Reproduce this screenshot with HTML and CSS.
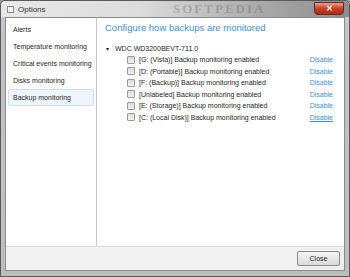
FILE: index.html
```html
<!DOCTYPE html>
<html lang="en">
<head>
    <meta charset="UTF-8">
    <title>Options</title>
    <link rel="stylesheet" href="styles.css">
</head>
<body>
    <div class="window">
        <div class="titlebar">
            <span class="app-icon"></span>
            <span class="title">Options</span>
            <span class="watermark">SOFTPEDIA</span>
            <span class="close-x">&#x2715;</span>
        </div>
        <div class="client">
            <div class="main">
                <ul class="nav">
                    <li>Alerts</li>
                    <li>Temperature monitoring</li>
                    <li>Critical events monitoring</li>
                    <li>Disks monitoring</li>
                    <li class="selected">Backup monitoring</li>
                </ul>
                <div class="panel">
                    <h1>Configure how backups are monitored</h1>
                    <div class="disk">
                        <span class="bullet">&#9662;</span>
                        <span>WDC WD3200BEVT-711.0</span>
                    </div>
                    <div class="rows">
                        <div class="row"><span class="check"></span><span class="label">[G: (Vista)] Backup monitoring enabled</span><a class="link">Disable</a></div>
                        <div class="row"><span class="check"></span><span class="label">[D: (Portable)] Backup monitoring enabled</span><a class="link">Disable</a></div>
                        <div class="row"><span class="check"></span><span class="label">[F: (Backup)] Backup monitoring enabled</span><a class="link">Disable</a></div>
                        <div class="row"><span class="check"></span><span class="label">[Unlabeled] Backup monitoring enabled</span><a class="link">Disable</a></div>
                        <div class="row"><span class="check"></span><span class="label">[E: (Storage)] Backup monitoring enabled</span><a class="link">Disable</a></div>
                        <div class="row"><span class="check"></span><span class="label">[C: (Local Disk)] Backup monitoring enabled</span><a class="link hover">Disable</a></div>
                    </div>
                </div>
            </div>
            <div class="footer">
                <button class="btn">Close</button>
            </div>
        </div>
    </div>
</body>
</html>
```

FILE: styles.css
```css
* {
    margin: 0;
    padding: 0;
    box-sizing: border-box;
}

body {
    font-family: "Liberation Sans", Arial, sans-serif;
    font-size: 7px;
    color: #1e1e1e;
    background: #9a9a9a;
}

.window {
    width: 350px;
    height: 277px;
    display: flex;
    flex-direction: column;
    background: linear-gradient(180deg, #d6d6d6 0%, #c4c4c4 10%, #bdbdbd 100%);
    border: 1px solid #5a5a5a;
    border-radius: 5px 5px 0 0;
    padding: 0 4px 5px 4px;
}

.titlebar {
    height: 16px;
    display: flex;
    align-items: center;
    position: relative;
    background: linear-gradient(90deg, #e8e8e8 0%, #dcdcdc 40%, #a8a8a8 75%, #8c8c8c 100%);
    margin: 0 -4px;
    padding: 0 4px;
    border-radius: 5px 5px 0 0;
}

.app-icon {
    width: 7px;
    height: 7px;
    border: 1px solid #8a8a8a;
    background: #f4f4f4;
    margin: 0 4px 0 2px;
}

.title {
    font-size: 8px;
    color: #303030;
}

.watermark {
    position: absolute;
    left: 172px;
    top: 0;
    line-height: 15px;
    font-family: "Liberation Serif", serif;
    font-size: 13px;
    font-weight: bold;
    letter-spacing: 2px;
    color: rgba(80, 80, 80, 0.3);
}

.close-x {
    position: absolute;
    right: 5px;
    top: 1px;
    width: 30px;
    height: 13px;
    border-radius: 0 0 4px 4px;
    background: linear-gradient(180deg, #e8a090 0%, #c8402a 50%, #b02810 100%);
    border: 1px solid #6a2a20;
    color: #ffffff;
    font-size: 8px;
    font-weight: bold;
    display: flex;
    align-items: center;
    justify-content: center;
}

.client {
    flex: 1;
    display: flex;
    flex-direction: column;
    border: 1px solid #8a8a8a;
    background: #ffffff;
}

.main {
    flex: 1;
    display: flex;
}

.nav {
    list-style: none;
    width: 91px;
    border-right: 1px solid #c8c8c8;
    padding: 3px 2px;
}

.nav li {
    height: 17px;
    line-height: 15px;
    padding: 0 4px;
    border: 1px solid transparent;
    border-radius: 2px;
    white-space: nowrap;
}

.nav li.selected {
    background: #eef5fd;
    border-color: #c9e0f7;
}

.panel {
    flex: 1;
    padding: 4px 8px 0 8px;
}

h1 {
    font-size: 9.5px;
    font-weight: normal;
    color: #3a8fe0;
    margin-bottom: 10px;
}

.disk {
    display: flex;
    align-items: center;
    height: 11px;
    padding-left: 1px;
}

.bullet {
    font-size: 6px;
    width: 9px;
}

.rows {
    padding-left: 22px;
}

.row {
    display: flex;
    align-items: center;
    height: 11.5px;
}

.check {
    width: 8px;
    height: 8px;
    border: 1px solid #9a9a9a;
    border-radius: 1px;
    background: linear-gradient(180deg, #dcdcdc, #f2f2f2);
    margin-right: 4px;
}

.label {
    flex: 1;
    white-space: nowrap;
}

.link {
    color: #3a8fe0;
    margin-right: 3px;
}

.link.hover {
    text-decoration: underline;
}

.footer {
    height: 24px;
    background: #f0f0f0;
    border-top: 1px solid #dcdcdc;
    display: flex;
    align-items: center;
    justify-content: flex-end;
    padding-right: 4px;
}

.btn {
    width: 43px;
    height: 15px;
    font-family: inherit;
    font-size: 7px;
    color: #1e1e1e;
    border: 1px solid #8a8a8a;
    border-radius: 2px;
    background: linear-gradient(180deg, #f6f6f6 0%, #e8e8e8 50%, #d8d8d8 100%);
}
```
